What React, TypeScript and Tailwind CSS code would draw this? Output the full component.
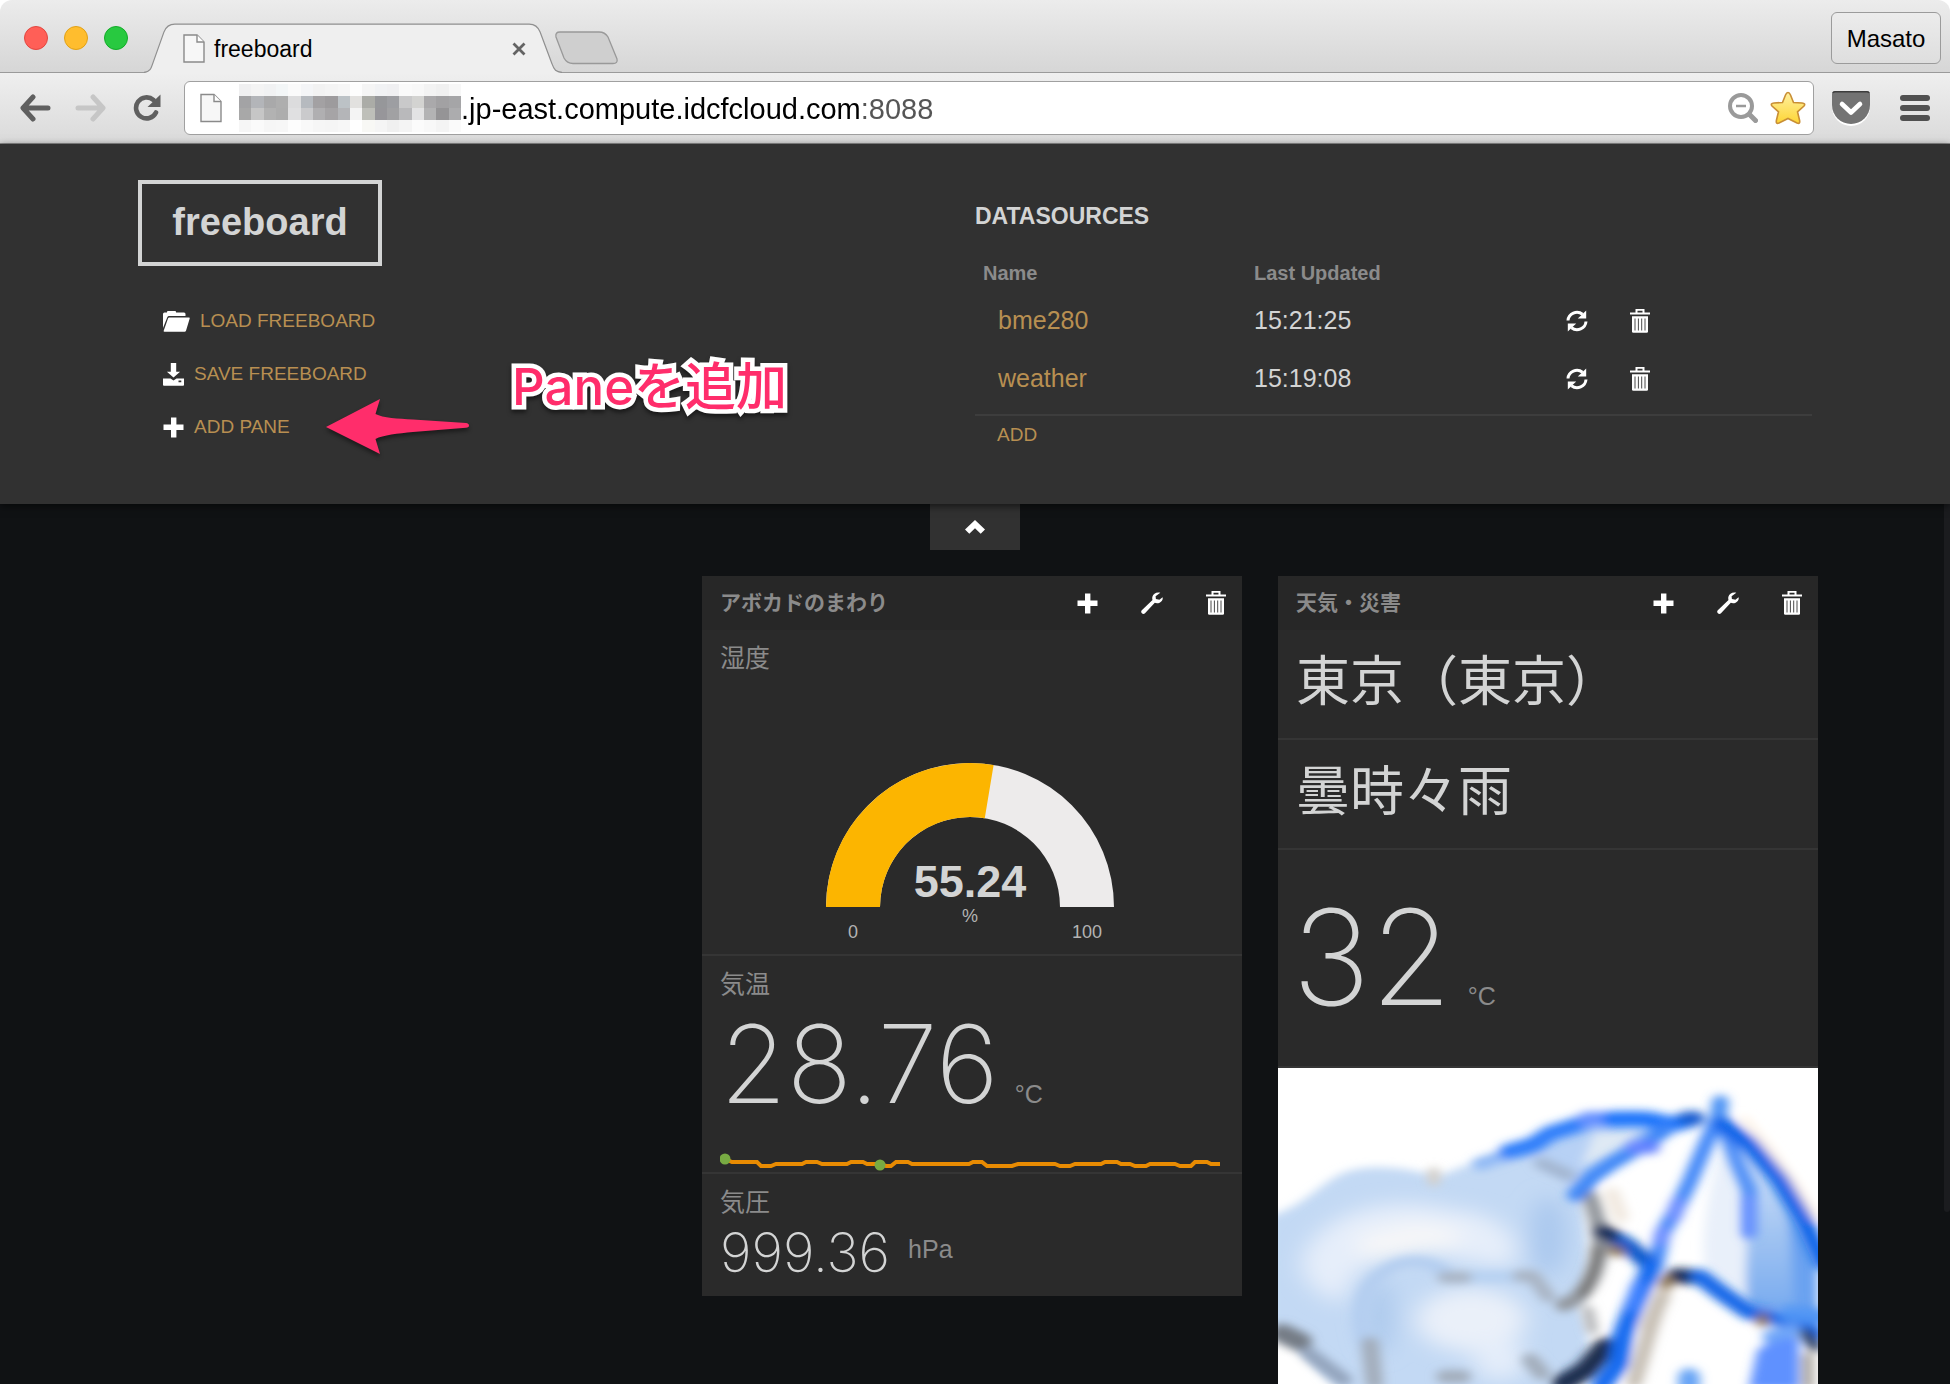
import type { ReactNode } from "react";

function PageIcon({ className }: { className: string }) {
  return (
    <svg viewBox="0 0 22 29" className={className} aria-hidden="true">
      <path d="M1 1h13l7 7v20H1z" fill="#f7f7f7" stroke="#8a8a8a" strokeWidth="1.4" />
      <path d="M14 1v7h7" fill="#fff" stroke="#8a8a8a" strokeWidth="1.4" />
    </svg>
  );
}

function PlusIcon() {
  return (
    <svg viewBox="0 0 21 21" className="size-[21px] shrink-0" fill="#fff" aria-hidden="true">
      <path d="M8 0.5h5.400v7.100h7.100v5.400h-7.100v7.500H8V13H0.500V7.600H8z" />
    </svg>
  );
}

function TrashIcon() {
  return (
    <svg viewBox="0 0 20 24" className="h-6 w-5 shrink-0" aria-hidden="true">
      <path d="M0 3.500h5.500V0h9v3.500H20V5.600H0zM7.500 1.800v1.700h5V1.800z" fill="#fff" fillRule="evenodd" />
      <path d="M2 7.300h16V22.500q0 1.300-1.300 1.300H3.300Q2 23.800 2 22.500z" fill="#fff" />
      <path d="M5 9.500v12M8.400 9.500v12M11.700 9.500v12M15 9.500v12" stroke="#4a4a4a" strokeWidth="1" />
    </svg>
  );
}

function WrenchIcon() {
  return (
    <svg viewBox="0 0 22 22" className="size-[22px] shrink-0" aria-hidden="true">
      <path
        d="M19.300 0.800C15.800-0.300 12.200 1.500 11.400 4.800C11.100 6 11.200 7 11.500 8L0.800 18.200C-0.100 19.200 0 20.600 0.900 21.300C1.800 22.200 3.200 22.100 4 21.200L13.800 10.800C15 11.400 16.600 11.500 18.200 10.900C20.800 9.900 22.200 7.400 21.600 5.200L18.400 7.800L14.900 6.900L14.600 4.200Z"
        fill="#fff"
      />
    </svg>
  );
}

function RefreshIcon() {
  return (
    <svg viewBox="0 0 22 22" className="size-[22px] shrink-0" aria-hidden="true">
      <path d="M2 10.500A9 8.800 0 0 1 16.500 4.200" fill="none" stroke="#fff" strokeWidth="3" />
      <path d="M20.200 0.500v8h-8.400z" fill="#fff" />
      <path d="M20 11.500A9 8.800 0 0 1 5.500 17.800" fill="none" stroke="#fff" strokeWidth="3" />
      <path d="M1.800 21.500v-8h8.400z" fill="#fff" />
    </svg>
  );
}

function FolderIcon() {
  return (
    <svg viewBox="0 0 27 21" className="h-[21px] w-[27px] shrink-0" fill="#fff" aria-hidden="true">
      <path d="M0 17V3Q0 1.500 1.500 1.500H4V0.800Q4 0 5 0H12Q13 0 13 0.800V1.500H21Q22.500 1.500 22.500 3V5H6Q4.800 5 4.300 6.200Z" />
      <path d="M6.300 6.500H26Q27 6.500 26.700 7.500L23 19.800Q22.600 20.800 21.600 20.800H1.500Q0.300 20.800 0.700 19.700L5 7.400Q5.400 6.500 6.300 6.500Z" />
    </svg>
  );
}

function SaveIcon() {
  return (
    <svg viewBox="0 0 21 23" className="h-[23px] w-[21px] shrink-0" fill="#fff" aria-hidden="true">
      <path d="M7.800 0h5.400v8.800h3.900L10.500 14.600L3.900 8.800h3.900z" />
      <path d="M0 15.500H7.500L10.500 17.500l3-2H21V22q0 0.800-1 0.800H1Q0 22.800 0 22zM15.500 17.500v1.800h2.800v-1.800z" fillRule="evenodd" />
    </svg>
  );
}

const tones = [
  ["#f0f0f1", "#f4f4f4", "#f1f2f3", "#f3f6f7", "#fafafa", "#f4f5f7", "#f2f2f2", "#f4f4f4", "#f6f6f6", "#fdfdfd", "#f5f5f5", "#f1f2f4", "#f0f0f2", "#fafafa", "#f8f8f8", "#f3f3f3", "#f0f0f0", "#f7f7f7"],
  ["#a3a3a5", "#b3b5b9", "#a9a9aa", "#aeaeae", "#dcdcdd", "#b6babf", "#a3a1a3", "#9d9b9d", "#bcc2c6", "#e2e1df", "#abaca7", "#96979a", "#9d9ea2", "#c9c9ca", "#d3d3d1", "#aaa9ab", "#a2a1a3", "#a5a5a7"],
  ["#a8a8a8", "#c6c6c6", "#b2b2b2", "#adadad", "#e0e0e1", "#cacacc", "#b0afb1", "#a6a4a6", "#b4b5b8", "#f4f4f4", "#bebfb9", "#97969a", "#a1a1a3", "#b9b9bb", "#e3e3e4", "#b3b3b4", "#959496", "#acacae"],
  ["#f6f6f6", "#fafafa", "#f6f6f6", "#f7f7f7", "#fdfdfd", "#f9f9f9", "#f6f6f6", "#f5f5f5", "#f7f7f7", "#ffffff", "#f8f8f5", "#f5f5f5", "#f0f0f0", "#f4f4f4", "#fbfbfb", "#f8f8f8", "#f4f4f4", "#fafafa"],
];

function Mosaic() {
  return (
    <svg viewBox="0 0 18 4" preserveAspectRatio="none" shapeRendering="crispEdges" className="h-12 w-[222px] shrink-0" aria-hidden="true">
      {tones.map((row, y) => row.map((c, x) => <rect key={`${x}-${y}`} x={x} y={y} width="1" height="1" fill={c} />))}
    </svg>
  );
}

function TabStrip() {
  return (
    <div className="relative flex h-[73px] items-start rounded-t-xl border-b border-[#9a9a9a] bg-linear-to-b from-[#ececec] to-[#d6d6d6]">
      <div className="flex gap-4 pt-[26px] pl-6">
        <button aria-label="Close window" className="size-6 rounded-full border border-[#e2463f] bg-[#ff5f57]" />
        <button aria-label="Minimize window" className="size-6 rounded-full border border-[#e1a116] bg-[#ffbd2e]" />
        <button aria-label="Zoom window" className="size-6 rounded-full border border-[#12ac28] bg-[#28c940]" />
      </div>
      <div className="relative -mb-px ml-4 flex h-[73px] w-[418px] shrink-0 items-start">
        <svg viewBox="0 0 420 50" className="absolute top-[23px] left-0 h-[50px] w-[418px]" aria-hidden="true">
          <path d="M0 50C6 49 7 46 9 40L20 9Q23 1 31 1H387Q395 1 398 9L410 41C412 47 414 49 420 50Z" fill="#efefef" />
          <path d="M0 49.500C6 49 7 46 9 40L20 9Q23 1 31 1H387Q395 1 398 9L410 41C412 47 414 49 420 49.500" fill="none" stroke="#8f8f8f" strokeWidth="1.200" />
        </svg>
        <div className="relative flex w-full items-center pt-[34px] pr-9 pl-[39px]">
          <PageIcon className="h-[29px] w-[22px]" />
          <span className="ml-[9px] grow text-[23px] leading-7 text-black">freeboard</span>
          <button aria-label="Close tab">
            <svg viewBox="0 0 14 14" className="size-3.5" aria-hidden="true">
              <path d="M1.500 1.500l11 11M12.500 1.500l-11 11" stroke="#636363" strokeWidth="2.800" />
            </svg>
          </button>
        </div>
      </div>
      <button aria-label="New tab" className="-ml-2 mt-[31px]">
        <svg viewBox="0 0 65 34" className="h-[34px] w-[65px]" aria-hidden="true">
          <path d="M6 1H45Q51 1 54 6L63 28Q64 32.500 59 32.500H19Q13 32.500 10 27L2 6Q1 1 6 1Z" fill="#cfcfcf" stroke="#999" strokeWidth="1.300" />
        </svg>
      </button>
      <button className="mt-3 mr-[9px] ml-auto h-[52px] w-[110px] rounded-md border border-[#9b9b9b] bg-linear-to-b from-[#ececec] to-[#dedede] pt-0.5 text-2xl text-black">Masato</button>
    </div>
  );
}

function Toolbar() {
  return (
    <div className="flex h-[71px] items-center border-b border-[#8e8e8e] bg-linear-to-b from-[#efefef] to-[#dadada] pr-5 pl-[19px]">
      <button aria-label="Back">
        <svg viewBox="0 0 32 28" className="h-7 w-8" fill="none" stroke="#5f5f5f" strokeWidth="5" strokeLinecap="round" aria-hidden="true">
          <path d="M29 14H5M14 3L4 14l10 11" strokeLinejoin="round" />
        </svg>
      </button>
      <button aria-label="Forward" className="ml-6">
        <svg viewBox="0 0 32 28" className="h-7 w-8" fill="none" stroke="#c6c6c6" strokeWidth="5" strokeLinecap="round" aria-hidden="true">
          <path d="M3 14h24M18 3l10 11-10 11" strokeLinejoin="round" />
        </svg>
      </button>
      <button aria-label="Reload" className="ml-[26px]">
        <svg viewBox="0 0 28 28" className="size-7" aria-hidden="true">
          <path d="M23 18.500A10.500 10.500 0 1 1 20.500 6" fill="none" stroke="#5f5f5f" strokeWidth="4.600" strokeLinecap="round" />
          <path d="M27.500 0.500V13H14.500Z" fill="#5f5f5f" />
        </svg>
      </button>
      <div className="ml-[23px] flex h-[54px] min-w-0 grow items-center rounded-md border border-[#a0a0a0] bg-white pr-[7px] pl-[15px]">
        <PageIcon className="h-[30px] w-[22px] shrink-0" />
        <div className="w-[17px] shrink-0" />
        <Mosaic />
        <input
          aria-label="Address"
          defaultValue=".jp-east.compute.idcfcloud.com:8088"
          className="h-12 min-w-0 grow bg-[linear-gradient(90deg,#000000_400px,#555555_400px)] bg-clip-text pt-0.5 text-[29px] text-transparent outline-none"
        />
        <button aria-label="Zoom out">
          <svg viewBox="0 0 30 30" className="size-[30px]" fill="none" stroke="#9a9a9a" aria-hidden="true">
            <circle cx="13" cy="13" r="11" strokeWidth="4" />
            <path d="M8 13h10" strokeWidth="2.500" />
            <path d="M21.500 21.500l6 6" strokeWidth="5" strokeLinecap="round" />
          </svg>
        </button>
        <button aria-label="Bookmark" className="ml-3">
          <svg viewBox="0 0 36 34" className="h-[34px] w-9" aria-hidden="true">
            <defs>
              <linearGradient id="star" x1="0" y1="0" x2="0" y2="1">
                <stop offset="0" stopColor="#fff0a0" />
                <stop offset="1" stopColor="#fdd535" />
              </linearGradient>
            </defs>
            <path d="M18 1.500Q19.500 1.500 20.500 4L23.500 11.500L32 12Q36 12.500 34 15L27.500 20.800L29.500 29Q30.500 33.500 27 32L18 27.500L9 32Q5.500 33.500 6.500 29L8.500 20.800L2 15Q0 12.500 4 12L12.500 11.500L15.500 4Q16.500 1.500 18 1.500Z" fill="url(#star)" stroke="#c98f35" strokeWidth="1.600" />
          </svg>
        </button>
      </div>
      <button aria-label="Pocket" className="ml-[18px]">
        <svg viewBox="0 0 38 35" className="h-[35px] w-[38px]" aria-hidden="true">
          <path d="M0 3Q0 1 3 1H35Q38 1 38 3V15A19 19 0 0 1 0 15Z" fill="#fff" transform="translate(0 1)" />
          <path d="M0 3Q0 0 3 0H35Q38 0 38 3V14A19 19 0 0 1 0 14Z" fill="#737373" />
          <path d="M1 2Q1.500 0.800 3 0.800H35Q36.500 0.800 37 2" fill="none" stroke="#3d3d3d" strokeWidth="1.600" />
          <path d="M10 13l9 8.500L28 13" fill="none" stroke="#fff" strokeWidth="4.600" strokeLinecap="round" strokeLinejoin="round" />
        </svg>
      </button>
      <button aria-label="Menu" className="ml-[30px]">
        <svg viewBox="0 0 30 26" className="h-[26px] w-[30px]" fill="#505050" aria-hidden="true">
          <rect width="30" height="6" rx="3" />
          <rect y="10" width="30" height="6" rx="3" />
          <rect y="20" width="30" height="6" rx="3" />
        </svg>
      </button>
    </div>
  );
}

const actions = [
  { label: "LOAD FREEBOARD", icon: <FolderIcon /> },
  { label: "SAVE FREEBOARD", icon: <SaveIcon /> },
  { label: "ADD PANE", icon: <PlusIcon /> },
];

const sources = [
  { name: "bme280", updated: "15:21:25" },
  { name: "weather", updated: "15:19:08" },
];

function AdminPanel() {
  return (
    <header className="relative z-10 grid grid-cols-2 bg-[#313131] shadow-[0_2px_8px_rgba(0,0,0,0.6)]">
      <div className="pt-9 pl-[138px]">
        <h1 className="flex h-[86px] w-[244px] items-center justify-center border-4 border-[#d3d4d4] pb-0.5 text-[38px] font-bold text-[#d3d4d4]">freeboard</h1>
        <nav className="mt-[29px] flex flex-col items-start pl-[25px]">
          {actions.map((a) => (
            <button key={a.label} className="flex h-[53px] items-center gap-2.5 text-[19px] text-[#b88f51]">
              {a.icon}
              {a.label}
            </button>
          ))}
        </nav>
      </div>
      <section className="pt-[58px] pr-[138px] pb-[55px]">
        <h2 className="text-[23px] leading-7 font-bold text-[#d3d4d4]">DATASOURCES</h2>
        <div className="mt-[26px] border-b-2 border-[#3d3d3d] pb-1.5">
          <table className="w-full table-fixed text-left">
            <thead>
              <tr className="h-9 text-xl text-[#8b8b8b]">
                <th className="p-0 pb-0.5 pl-2">Name</th>
                <th className="p-0 pb-0.5">Last Updated</th>
                <td />
              </tr>
            </thead>
            <tbody>
              {sources.map((s) => (
                <tr key={s.name} className="h-[58px] text-[25px] text-[#d3d4d4]">
                  <td className="p-0 pl-[23px]">
                    <button className="text-[#b88f51]">{s.name}</button>
                  </td>
                  <td className="p-0">{s.updated}</td>
                  <td className="p-0 pl-[33px]">
                    <div className="flex items-center gap-[42px]">
                      <button aria-label={`Refresh ${s.name}`}><RefreshIcon /></button>
                      <button aria-label={`Delete ${s.name}`}><TrashIcon /></button>
                    </div>
                  </td>
                </tr>
              ))}
            </tbody>
          </table>
        </div>
        <button className="mt-[5px] ml-[22px] block text-[19px] leading-7 text-[#b88f51]">ADD</button>
      </section>

      <svg viewBox="0 0 150 62" className="absolute top-[252px] left-[323px] h-[62px] w-[150px] drop-shadow-[0_3px_2px_rgba(0,0,0,0.45)]" aria-hidden="true">
        <path d="M3 31L57 3L52.500 18C60 22 75 22.500 90 23.500L143 27Q146 27.500 146 29.500Q146 31.500 143 31.800L90 36C75 37.500 60 39 52.500 43L57 58Z" fill="#ff2d6b" />
      </svg>
      <p className="absolute top-[205px] left-[512px] font-[Inter,'Noto_Sans_CJK_JP',sans-serif] text-[51px] leading-[76px] font-medium whitespace-nowrap text-[#ff2d6b] [-webkit-text-stroke:9px_#ffffff] [paint-order:stroke_fill] drop-shadow-[0_3px_2px_rgba(0,0,0,0.5)]">Paneを追加</p>
    </header>
  );
}

function Pane({ title, className, children }: { title: string; className: string; children: ReactNode }) {
  return (
    <article className={className}>
      <div className="flex h-[54px] items-center bg-[#272727] pr-4 pl-[18px]">
        <h2 className="grow text-[21px] font-bold text-[#8b8b8b]">{title}</h2>
        <div className="flex items-center gap-[43px]">
          <button aria-label="Add widget"><PlusIcon /></button>
          <button aria-label="Pane settings"><WrenchIcon /></button>
          <button aria-label="Delete pane"><TrashIcon /></button>
        </div>
      </div>
      {children}
    </article>
  );
}

function Gauge() {
  return (
    <svg viewBox="0 0 300 200" className="mx-auto mt-20 block h-[200px] w-[300px] -translate-x-0.5" role="img" aria-label="55.24 %">
      <path d="M6 153A144 144 0 0 1 294 153H240A90 90 0 0 0 60 153Z" fill="#edebeb" />
      <path d="M6 153A144 144 0 0 1 173.610 10.940L164.750 64.220A90 90 0 0 0 60 153Z" fill="#fcb500" />
      <g textAnchor="middle" fontFamily="'Liberation Sans', Arial, sans-serif">
        <text x="150" y="143" fontSize="45" fontWeight="bold" fill="#d3d4d4">55.24</text>
        <text x="150" y="168" fontSize="18" fill="#b3b3b3">%</text>
        <text x="33" y="184" fontSize="18" fill="#b3b3b3">0</text>
        <text x="267" y="184" fontSize="18" fill="#b3b3b3">100</text>
      </g>
    </svg>
  );
}

function Sparkline() {
  return (
    <svg viewBox="0 0 504 20" className="h-5 w-[504px] shrink-0" aria-hidden="true">
      <path
        d="M5 7L12 10H37L41 14H51L56 12H82L86 10H97L102 12H127L131 10H143L147 12H160L166 14H171L176 10H188L192 12H249L253 10H262L267 14H292L298 12H335L340 14H350L355 12H381L385 10H397L401 12H410L415 14H426L430 12H455L460 14H471L475 10H487L491 12H500"
        fill="none"
        stroke="#e88b02"
        strokeWidth="4"
      />
      <circle cx="5" cy="7" r="5.500" fill="#78ab43" />
      <circle cx="160" cy="13" r="5.500" fill="#78ab43" />
    </svg>
  );
}

function WeatherPicture() {
  return (
    <svg viewBox="41 54 1227 948" preserveAspectRatio="none" className="block aspect-[540/316] w-full bg-white" role="img" aria-label="曇時々雨">
      <defs>
        <filter id="soft" x="-10%" y="-10%" width="120%" height="120%"><feGaussianBlur stdDeviation="12" /></filter>
        <filter id="softer" x="-30%" y="-30%" width="160%" height="160%"><feGaussianBlur stdDeviation="28" /></filter>
        <linearGradient id="panel" x1="0" y1="0" x2="0" y2="1">
          <stop offset="0" stopColor="#dbe8fa" />
          <stop offset="0.500" stopColor="#a3c5f2" />
          <stop offset="1" stopColor="#74a8ef" />
        </linearGradient>
      </defs>
      <g filter="url(#soft)" fill="none" strokeLinecap="round" strokeLinejoin="round">
        <path d="M500 350C600 290 680 240 760 215L930 235C850 290 770 350 715 450L640 400Z" fill="#b7d1f5" />
        <path d="M760 250L860 240L810 310L730 350Z" fill="#dfe9f4" />
        <path d="M1060 240C1140 310 1240 480 1268 640V810L1150 790C1110 760 1050 690 1010 650C1000 520 1030 360 1060 240Z" fill="#e9f0fa" />
        <path d="M1080 270C1150 330 1240 500 1268 640V810L1110 770C1090 660 1130 500 1080 270Z" fill="url(#panel)" />
        <path d="M1200 480L1268 640V820L1215 780Z" fill="#6aa2f0" />
        <path d="M20 500C90 470 115 430 160 390C200 350 260 345 330 358C370 368 390 375 420 372C470 340 520 325 580 325C650 325 700 400 735 450C735 560 765 650 720 760C750 820 750 880 740 950L700 1030H190L130 960C90 890 60 850 20 840Z" fill="#c3d9f4" />
      </g>
      <g filter="url(#softer)">
        <path d="M100 610C150 480 300 430 440 480C520 480 620 560 570 650C480 650 380 590 310 600C240 630 200 690 190 760C130 740 80 680 100 610Z" fill="#e6eefa" />
        <path d="M350 520L460 540L440 590L240 640L220 560Z" fill="#f7f7f8" />
        <ellipse cx="480" cy="810" rx="125" ry="95" fill="#eaf0f9" />
        <ellipse cx="545" cy="930" rx="60" ry="60" fill="#e4edfa" />
        <ellipse cx="270" cy="800" rx="35" ry="110" fill="#aecaed" />
        <ellipse cx="655" cy="560" rx="40" ry="120" fill="#aac8ee" />
      </g>
      <g filter="url(#soft)" fill="none" strokeLinecap="round" strokeLinejoin="round">
        <path d="M240 880C215 780 230 690 310 645Q370 620 420 665" stroke="#b4cef0" strokeWidth="34" />
        <path d="M480 680H590" stroke="#b5d0f1" strokeWidth="30" />
        <path d="M420 682H465M590 678H620L655 740" stroke="#a9b4c3" strokeWidth="34" />
        <path d="M395 365V395" stroke="#d6cfc6" strokeWidth="26" />
        <path d="M640 340L700 375" stroke="#a3b5cf" strokeWidth="34" />
        <path d="M750 440C765 500 785 570 765 640C755 690 740 720 715 750L690 765" stroke="#92969c" strokeWidth="38" />
        <path d="M765 600C770 650 750 690 735 730" stroke="#747475" strokeWidth="28" />
        <path d="M745 780L755 840" stroke="#b3b4b6" strokeWidth="26" />
        <path d="M50 850L90 875" stroke="#747b85" strokeWidth="56" />
        <path d="M110 910L190 990" stroke="#92a3bb" strokeWidth="38" />
        <path d="M250 880L260 1000M420 980H460M615 930L640 970" stroke="#a3adbb" strokeWidth="40" />
        <path d="M41 950L80 940L130 1002H41Z" fill="#fff" />
        <path d="M800 430L820 500" stroke="#f1e9e0" strokeWidth="36" />
        <path d="M925 700L880 830" stroke="#eadfd1" strokeWidth="34" />
        <path d="M915 740C890 800 880 880 850 1000" stroke="#c5bdb2" strokeWidth="34" />
        <path d="M500 342L560 315" stroke="#8db7f5" strokeWidth="36" />
        <path d="M565 305L620 285L660 250L710 230L750 210" stroke="#2f7efa" strokeWidth="46" />
        <path d="M745 208H800" stroke="#6590ff" strokeWidth="46" />
        <path d="M800 208C860 205 890 205 930 225L975 210" stroke="#1d74fb" strokeWidth="48" />
        <path d="M970 205H990" stroke="#185bd0" strokeWidth="42" />
        <path d="M920 240L870 285L805 335L755 380L718 435" stroke="#3d86f7" strokeWidth="40" />
        <path d="M850 292H890" stroke="#6482ff" strokeWidth="38" />
        <path d="M1046 155L1040 215" stroke="#4a91f4" strokeWidth="38" />
        <path d="M1035 220C1010 290 985 370 975 400L945 480L915 550L900 640" stroke="#3f86f8" strokeWidth="36" />
        <path d="M948 460L942 500M915 545L910 570" stroke="#6a8cff" strokeWidth="34" />
        <path d="M1060 250L1085 340L1112 420L1112 550" stroke="#4b8cf7" strokeWidth="34" />
        <path d="M1110 450V550" stroke="#648eff" strokeWidth="32" />
        <path d="M1100 205L1160 300L1215 400L1262 500" stroke="#fdeedd" strokeWidth="14" />
        <path d="M1050 220L1110 280L1180 390L1235 510L1280 640" stroke="#0b64e8" strokeWidth="42" />
        <path d="M785 548L840 590L885 645" stroke="#1058cb" strokeWidth="44" />
        <path d="M780 545L795 555M945 678L980 680" stroke="#142f5b" strokeWidth="46" />
        <path d="M1000 680L1050 730L1110 785L1190 808L1260 850" stroke="#1267e8" strokeWidth="46" />
        <path d="M1200 790L1268 800" stroke="#4f94f4" strokeWidth="48" />
        <path d="M805 600L815 605M925 690L922 705M1142 805V815" stroke="#8c7450" strokeWidth="30" />
        <path d="M1240 850L1262 890" stroke="#34496d" strokeWidth="32" />
        <path d="M690 1000L740 960L785 890" stroke="#1e2f50" strokeWidth="54" />
        <path d="M890 650L855 750L825 850L815 940L775 1010" stroke="#126bf0" strokeWidth="46" />
        <path d="M860 710L848 770" stroke="#3d80ff" strokeWidth="36" />
        <path d="M1130 900L1200 840L1225 870V1020H1110Z" fill="#5e91ff" />
        <path d="M1160 860L1210 840" stroke="#6fa6f8" strokeWidth="38" />
        <path d="M1245 920V1010" stroke="#a9a49d" strokeWidth="26" />
        <path d="M975 980V1010" stroke="#68a4f5" strokeWidth="50" />
      </g>
    </svg>
  );
}

function Board() {
  return (
    <main className="flex min-h-0 grow items-start bg-[#101214]">
      <div className="flex min-w-0 grow flex-col">
        <button aria-label="Collapse panel" className="mx-auto flex h-[46px] w-[90px] translate-x-[3px] items-center justify-center bg-[#313131]">
          <svg viewBox="0 0 20 14" className="h-3.5 w-5" aria-hidden="true">
            <path d="M10 0L20 9.500L15.700 13.800L10 8.300L4.300 13.800L0 9.500Z" fill="#fff" />
          </svg>
        </button>
        <div className="mt-[26px] grid grid-cols-3 items-start gap-9 px-[126px]">
          <Pane title="アボカドのまわり" className="col-start-2 bg-[#2a2a2a]">
            <section className="h-[326px] border-b-2 border-[#353535] px-[18px] pt-3">
              <h3 className="text-[25px] leading-8 text-[#8b8b8b]">湿度</h3>
              <Gauge />
            </section>
            <section className="flex h-[218px] flex-col border-b-2 border-[#353535] px-[18px] pt-3">
              <h3 className="text-[25px] leading-8 text-[#8b8b8b]">気温</h3>
              <p className="flex items-baseline gap-4 pt-1">
                <span className="font-[Inter] text-[108px] leading-[120px] font-extralight text-[#d3d4d4]">28.76</span>
                <span className="text-[25px] text-[#8b8b8b]">°C</span>
              </p>
              <div className="mt-auto"><Sparkline /></div>
            </section>
            <section className="h-[122px] px-[18px] pt-3">
              <h3 className="text-[25px] leading-8 text-[#8b8b8b]">気圧</h3>
              <p className="flex items-center gap-[18px]">
                <span className="font-[Inter] text-[54px] leading-[70px] font-extralight text-[#d3d4d4]">999.36</span>
                <span className="pb-1.5 text-[25px] text-[#8b8b8b]">hPa</span>
              </p>
            </section>
          </Pane>
          <Pane title="天気・災害" className="bg-[#2a2a2a]">
            <section className="h-[110px] border-b-2 border-[#353535] px-[18px] pt-3 text-[54px] leading-[80px] text-[#d3d4d4]">東京（東京）</section>
            <section className="h-[110px] border-b-2 border-[#353535] px-[18px] pt-3 text-[54px] leading-[80px] text-[#d3d4d4]">曇時々雨</section>
            <section className="flex h-[218px] items-baseline gap-4 border-b-2 border-[#353535] px-3.5 pt-[37px]">
              <span className="font-[Inter] text-[132px] leading-[140px] font-extralight text-[#d3d4d4]">32</span>
              <span className="text-[25px] text-[#8b8b8b]">°C</span>
            </section>
            <WeatherPicture />
          </Pane>
        </div>
      </div>
      <div className="h-[708px] w-1.5 shrink-0 rounded-b bg-[#1b1c1f]" />
    </main>
  );
}

export default function App() {
  return (
    <div className="flex h-screen flex-col overflow-hidden bg-white font-['Liberation_Sans','Noto_Sans_CJK_JP',sans-serif]">
      <TabStrip />
      <Toolbar />
      <AdminPanel />
      <Board />
    </div>
  );
}
